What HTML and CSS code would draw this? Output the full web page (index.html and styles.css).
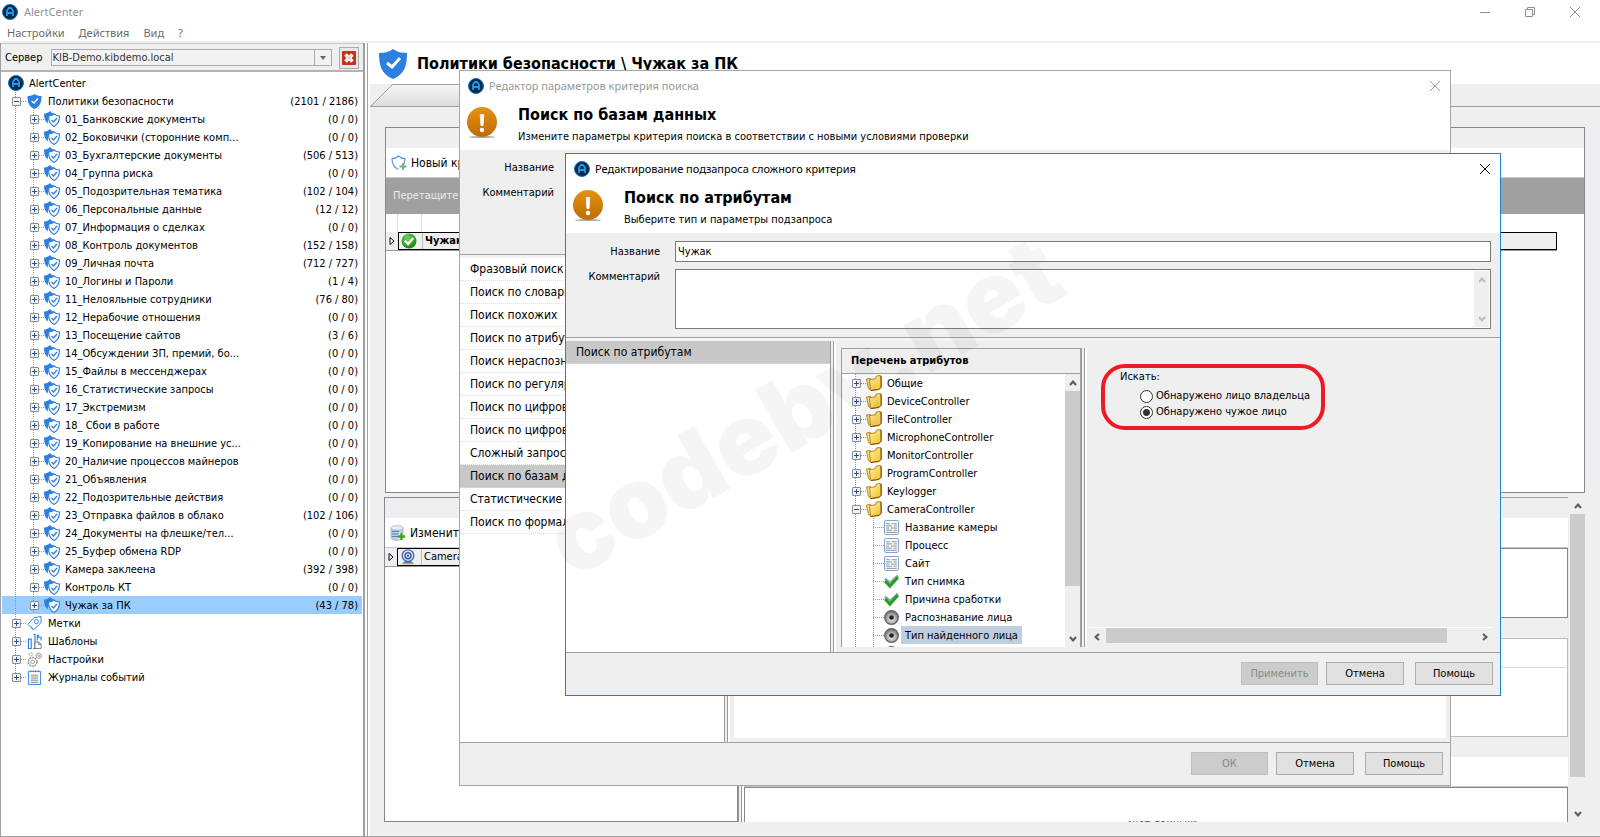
FILE: index.html
```html
<!DOCTYPE html>
<html lang="ru">
<head>
    <meta charset="UTF-8">
    <meta name="viewport" content="width=device-width, initial-scale=1.0">
    <title>AlertCenter</title>
    <link rel="stylesheet" href="styles.css">
</head>
<body>

<!-- Набор иконок -->
<svg class="sprite" aria-hidden="true">
    <defs>
        <linearGradient id="g-gold" x1="0" y1="0" x2="1" y2="1">
            <stop offset="0" stop-color="#fff3b0"/><stop offset="1" stop-color="#f2c01c"/>
        </linearGradient>
        <linearGradient id="g-orange" x1="0" y1="0" x2="0" y2="1">
            <stop offset="0" stop-color="#e39314"/><stop offset="1" stop-color="#c06a02"/>
        </linearGradient>
        <radialGradient id="g-green" cx="0.4" cy="0.3" r="0.8">
            <stop offset="0" stop-color="#6fd35a"/><stop offset="1" stop-color="#0b7d12"/>
        </radialGradient>
        <radialGradient id="g-steel" cx="0.5" cy="0.6" r="0.5">
            <stop offset="0" stop-color="#f4f4f4"/><stop offset="0.6" stop-color="#b4b4b4"/><stop offset="1" stop-color="#7c7c7c"/>
        </radialGradient>
    </defs>
    <symbol id="i-app" viewBox="0 0 16 16">
        <circle cx="8" cy="8" r="7.500" fill="#0b2c49" stroke="#1474b8"/>
        <path d="M5 12V6.500L7 4h2l2 2.500V12M5 9h6" fill="none" stroke="#1e9af0" stroke-width="1.800"/>
    </symbol>
    <symbol id="i-shield" viewBox="0 0 28 30">
        <path d="M14 0C10 3 5 4 0 4c0 12 2 21 14 26 12-5 14-14 14-26-5 0-10-1-14-4z" fill="#2d7fe0"/>
        <path d="M8 14l5 4 8-9" fill="none" stroke="#fff" stroke-width="3"/>
    </symbol>
    <symbol id="i-shields" viewBox="0 0 16 16">
        <path d="M6 0C4 2 2 2.500 0 2.500 0 7 1 10 3.500 12.500L5 5l6-2C9 2.500 7 1.500 6 0z" fill="#2d7fe0"/>
        <path d="M10 3C8.500 4.500 6.500 5 4.500 5c0 5 1.500 8.500 5.500 10.500 4-2 5.500-5.500 5.500-10.500C13.500 5 11.500 4.500 10 3z" fill="#fff" stroke="#2d7fe0" stroke-width="1.100"/>
        <path d="M7.500 9l2 2 3.500-4" fill="none" stroke="#2d7fe0" stroke-width="1.200"/>
    </symbol>
    <symbol id="i-shield-add" viewBox="0 0 16 16">
        <path d="M12.500 10c1-2 1.500-4 1.500-6.500C11.500 3.500 9 2.500 7.500 1 6 2.500 3.500 3.500 1 3.500 1 9 3 12.500 7.500 14.500" fill="none" stroke="#5b94d6" stroke-width="1.200"/>
        <path d="M12 8v7M8.500 11.500h7" stroke="#6fb07a" stroke-width="1.800"/>
    </symbol>
    <symbol id="i-tag" viewBox="0 0 16 16">
        <path d="M1 9l6-7 8-1.500V7l-8 8z" fill="#fff" stroke="#2d7fe0"/>
        <path d="M4 11l2.500 3" stroke="#2d7fe0"/>
        <circle cx="10" cy="6" r="2.200" fill="none" stroke="#2d7fe0"/>
    </symbol>
    <symbol id="i-templates" viewBox="0 0 16 16">
        <path d="M1.500 5.500h3v10h-3zM6.500.500h2v15h-2M11 7V1.500h1v2h3V7" fill="none" stroke="#2d7fe0" stroke-width="1.200"/>
        <path d="M8.500 8.500h4l2.500 2.500v4.500H8.500zM12 8.500V11h3" fill="#fff" stroke="#777"/>
    </symbol>
    <symbol id="i-gears" viewBox="0 0 16 16">
        <g fill="none" stroke="#9a9a9a">
            <circle cx="6" cy="10.500" r="4.600" stroke-width="1.600" stroke-dasharray="2.200 .700"/><circle cx="6" cy="10.500" r="2"/>
            <circle cx="4" cy="2.500" r="1.800" stroke-dasharray="1.500 .500"/>
            <circle cx="12.500" cy="4" r="2.800" stroke-width="1.400" stroke-dasharray="1.500 .600"/><circle cx="12.500" cy="4" r="1"/>
        </g>
    </symbol>
    <symbol id="i-log" viewBox="0 0 16 16">
        <path d="M1.500 1.500h13v14h-13z" fill="#fff" stroke="#2d7fe0"/>
        <path d="M4 0v2.500M6.700 0v2.500M9.300 0v2.500M12 0v2.500" stroke="#888"/>
        <path d="M4 5.500h8M4 7.500h8M4 9.500h8M4 11.500h8M4 13.500h8" stroke="#888"/>
    </symbol>
    <symbol id="i-warn" viewBox="0 0 30 31">
        <ellipse cx="15" cy="30" rx="13" ry="1" fill="#aaa"/>
        <circle cx="15" cy="15" r="15" fill="url(#g-orange)"/>
        <path d="M13.300 7.500h3.400l-.600 11h-2.200z" fill="#fff" stroke="#fff" stroke-width=".800" stroke-linejoin="round"/>
        <circle cx="15" cy="23" r="2.200" fill="#fff"/>
    </symbol>
    <symbol id="i-ok" viewBox="0 0 16 16">
        <circle cx="8" cy="8" r="7.500" fill="url(#g-green)"/>
        <path d="M3.800 7.500l3.200 3.500 5.300-6" fill="none" stroke="#fff" stroke-width="2.400"/>
    </symbol>
    <symbol id="i-db" viewBox="0 0 16 16">
        <path d="M1 3v10c0 3 12 3 12 0V3z" fill="#c3d0dc" stroke="#8f9eac" stroke-width=".600"/>
        <ellipse cx="7" cy="3" rx="6" ry="2.300" fill="#e8eef3" stroke="#8f9eac" stroke-width=".600"/>
        <path d="M2 6.500h7M2 9h7M2 11.500h6" stroke="#4a83c4"/>
        <path d="M11.500 8v7M8 11.500h7" stroke="#fff" stroke-width="4"/>
        <path d="M11.500 8v7M8 11.500h7" stroke="#3aa51c" stroke-width="2.400"/>
    </symbol>
    <symbol id="i-cam" viewBox="0 0 16 18">
        <path d="M3 15.500c2-2 8-2 10 0z" fill="#4b6fae" stroke="#4b6fae"/>
        <path d="M1.500 16.500h13" stroke="#d99a4a" stroke-width="1.500"/>
        <circle cx="8" cy="7.500" r="6.500" fill="#dfe6f1" stroke="#4b6fae" stroke-width="1.600"/>
        <circle cx="8" cy="7.500" r="3.300" fill="#fff" stroke="#3561ac" stroke-width="1.800"/>
        <circle cx="8" cy="7.500" r="1.200" fill="#27508f"/>
    </symbol>
    <symbol id="i-folder" viewBox="0 0 16 16">
        <path d="M.500 4l4-.500L5 15l-2.500-1.500z" fill="#fbe38a" stroke="#b07a12" stroke-width=".900"/>
        <path d="M3.500 4.500l6-.700.800-2.800 4.200-.500.500 11.500L13 14l-8.500 1.500z" fill="url(#g-gold)" stroke="#b07a12" stroke-width=".900"/>
        <path d="M15.300 1v11.200L13.200 14.500 5 15.600" fill="none" stroke="#6b4a0c" stroke-width=".900"/>
    </symbol>
    <symbol id="i-text" viewBox="0 0 14 14">
        <rect x=".500" y=".500" width="13" height="13" rx="1.500" fill="#fff" stroke="#7da7d3"/>
        <path d="M2 3.500h3.500M7 3.500h5M2 5.500h5.500M9 5.500h3M2 7.500h3M6.500 7.500H12M2 9.500h5.500M9 9.500h3M2 11.500h10" stroke="#6d7885" stroke-width=".800"/>
    </symbol>
    <symbol id="i-check" viewBox="0 0 14 13">
        <path d="M1 4l4.500 4L13 1" fill="none" stroke="#8fa0bd" stroke-width="2.500"/>
        <path d="M1 6l4.500 5L13 2.500" fill="none" stroke="#1ea51a" stroke-width="2.800"/>
    </symbol>
    <symbol id="i-radio" viewBox="0 0 15 15">
        <circle cx="7.500" cy="7.500" r="6.800" fill="url(#g-steel)" stroke="#5e5e5e" stroke-width="1.200"/>
        <circle cx="7.500" cy="7.500" r="2.300" fill="#222"/>
    </symbol>
    <symbol id="i-x" viewBox="0 0 10 10"><path d="M0 0l10 10M10 0L0 10" stroke="currentColor" fill="none"/></symbol>
    <symbol id="i-min" viewBox="0 0 10 10"><path d="M0 5.500h10" stroke="currentColor"/></symbol>
    <symbol id="i-max" viewBox="0 0 10 10"><path d="M.500 2.500h7v7h-7zM2.500 2.500v-2h7v7h-2" stroke="currentColor" fill="none"/></symbol>
    <symbol id="i-stop" viewBox="0 0 14 14">
        <rect width="14" height="14" rx="1" fill="#c9301c"/>
        <path d="M3.500 3.500l7 7M10.500 3.500l-7 7" stroke="#fff" stroke-width="3.600"/>
        <path d="M4.500 4.500l5 5M9.500 4.500l-5 5" stroke="#d9c9c4" stroke-width="1"/>
    </symbol>
    <symbol id="i-up" viewBox="0 0 8 8"><path d="M1 6l3-3.500L7 6" stroke="currentColor" stroke-width="2" fill="none"/></symbol>
    <symbol id="i-down" viewBox="0 0 8 8"><path d="M1 2l3 3.500L7 2" stroke="currentColor" stroke-width="2" fill="none"/></symbol>
    <symbol id="i-left" viewBox="0 0 8 8"><path d="M6 1L2.500 4 6 7" stroke="currentColor" stroke-width="2" fill="none"/></symbol>
    <symbol id="i-right" viewBox="0 0 8 8"><path d="M2 1l3.500 3L2 7" stroke="currentColor" stroke-width="2" fill="none"/></symbol>
    <symbol id="i-mark" viewBox="0 0 6 8"><path d="M1 .500l4 3.500-4 3.500z" stroke="#000" fill="#fff"/></symbol>
</svg>

<!-- Главное окно -->
<header class="titlebar">
    <svg class="ico"><use href="#i-app"/></svg>
    <span class="titlebar-text">AlertCenter</span>
    <div class="win-buttons">
        <button aria-label="Свернуть"><svg><use href="#i-min"/></svg></button>
        <button aria-label="Развернуть"><svg><use href="#i-max"/></svg></button>
        <button aria-label="Закрыть"><svg><use href="#i-x"/></svg></button>
    </div>
</header>
<nav class="menu">
    <a href="#">Настройки</a>
    <a href="#">Действия</a>
    <a href="#">Вид</a>
    <a href="#">?</a>
</nav>

<main class="workspace">
    <aside class="sidebar">
        <div class="server">
            <label for="server">Сервер</label>
            <div class="combo">
                <select id="server"><option>KIB-Demo.kibdemo.local</option></select>
            </div>
            <button class="stop" aria-label="Отключиться"><svg><use href="#i-stop"/></svg></button>
        </div>
        <ul class="tree">
            <li class="root"><svg class="ico"><use href="#i-app"/></svg><span>AlertCenter</span></li>
            <li class="l1"><button class="exp open" aria-label="Свернуть"></button><svg class="ico"><use href="#i-shield"/></svg><span>Политики безопасности</span><em>(2101 / 2186)</em></li>
            <li class="l2"><button class="exp" aria-label="Развернуть"></button><svg class="ico"><use href="#i-shields"/></svg><span>01_Банковские документы</span><em>(0 / 0)</em></li>
            <li class="l2"><button class="exp" aria-label="Развернуть"></button><svg class="ico"><use href="#i-shields"/></svg><span>02_Боковички (сторонние комп...</span><em>(0 / 0)</em></li>
            <li class="l2"><button class="exp" aria-label="Развернуть"></button><svg class="ico"><use href="#i-shields"/></svg><span>03_Бухгалтерские документы</span><em>(506 / 513)</em></li>
            <li class="l2"><button class="exp" aria-label="Развернуть"></button><svg class="ico"><use href="#i-shields"/></svg><span>04_Группа риска</span><em>(0 / 0)</em></li>
            <li class="l2"><button class="exp" aria-label="Развернуть"></button><svg class="ico"><use href="#i-shields"/></svg><span>05_Подозрительная тематика</span><em>(102 / 104)</em></li>
            <li class="l2"><button class="exp" aria-label="Развернуть"></button><svg class="ico"><use href="#i-shields"/></svg><span>06_Персональные данные</span><em>(12 / 12)</em></li>
            <li class="l2"><button class="exp" aria-label="Развернуть"></button><svg class="ico"><use href="#i-shields"/></svg><span>07_Информация о сделках</span><em>(0 / 0)</em></li>
            <li class="l2"><button class="exp" aria-label="Развернуть"></button><svg class="ico"><use href="#i-shields"/></svg><span>08_Контроль документов</span><em>(152 / 158)</em></li>
            <li class="l2"><button class="exp" aria-label="Развернуть"></button><svg class="ico"><use href="#i-shields"/></svg><span>09_Личная почта</span><em>(712 / 727)</em></li>
            <li class="l2"><button class="exp" aria-label="Развернуть"></button><svg class="ico"><use href="#i-shields"/></svg><span>10_Логины и Пароли</span><em>(1 / 4)</em></li>
            <li class="l2"><button class="exp" aria-label="Развернуть"></button><svg class="ico"><use href="#i-shields"/></svg><span>11_Нелояльные сотрудники</span><em>(76 / 80)</em></li>
            <li class="l2"><button class="exp" aria-label="Развернуть"></button><svg class="ico"><use href="#i-shields"/></svg><span>12_Нерабочие отношения</span><em>(0 / 0)</em></li>
            <li class="l2"><button class="exp" aria-label="Развернуть"></button><svg class="ico"><use href="#i-shields"/></svg><span>13_Посещение сайтов</span><em>(3 / 6)</em></li>
            <li class="l2"><button class="exp" aria-label="Развернуть"></button><svg class="ico"><use href="#i-shields"/></svg><span>14_Обсуждении ЗП, премий, бо...</span><em>(0 / 0)</em></li>
            <li class="l2"><button class="exp" aria-label="Развернуть"></button><svg class="ico"><use href="#i-shields"/></svg><span>15_Файлы в мессенджерах</span><em>(0 / 0)</em></li>
            <li class="l2"><button class="exp" aria-label="Развернуть"></button><svg class="ico"><use href="#i-shields"/></svg><span>16_Статистические запросы</span><em>(0 / 0)</em></li>
            <li class="l2"><button class="exp" aria-label="Развернуть"></button><svg class="ico"><use href="#i-shields"/></svg><span>17_Экстремизм</span><em>(0 / 0)</em></li>
            <li class="l2"><button class="exp" aria-label="Развернуть"></button><svg class="ico"><use href="#i-shields"/></svg><span>18_ Сбои в работе</span><em>(0 / 0)</em></li>
            <li class="l2"><button class="exp" aria-label="Развернуть"></button><svg class="ico"><use href="#i-shields"/></svg><span>19_Копирование на внешние ус...</span><em>(0 / 0)</em></li>
            <li class="l2"><button class="exp" aria-label="Развернуть"></button><svg class="ico"><use href="#i-shields"/></svg><span>20_Наличие процессов майнеров</span><em>(0 / 0)</em></li>
            <li class="l2"><button class="exp" aria-label="Развернуть"></button><svg class="ico"><use href="#i-shields"/></svg><span>21_Объявления</span><em>(0 / 0)</em></li>
            <li class="l2"><button class="exp" aria-label="Развернуть"></button><svg class="ico"><use href="#i-shields"/></svg><span>22_Подозрительные действия</span><em>(0 / 0)</em></li>
            <li class="l2"><button class="exp" aria-label="Развернуть"></button><svg class="ico"><use href="#i-shields"/></svg><span>23_Отправка файлов в облако</span><em>(102 / 106)</em></li>
            <li class="l2"><button class="exp" aria-label="Развернуть"></button><svg class="ico"><use href="#i-shields"/></svg><span>24_Документы на флешке/тел...</span><em>(0 / 0)</em></li>
            <li class="l2"><button class="exp" aria-label="Развернуть"></button><svg class="ico"><use href="#i-shields"/></svg><span>25_Буфер обмена RDP</span><em>(0 / 0)</em></li>
            <li class="l2"><button class="exp" aria-label="Развернуть"></button><svg class="ico"><use href="#i-shields"/></svg><span>Камера заклеена</span><em>(392 / 398)</em></li>
            <li class="l2"><button class="exp" aria-label="Развернуть"></button><svg class="ico"><use href="#i-shields"/></svg><span>Контроль КТ</span><em>(0 / 0)</em></li>
            <li class="l2 selected"><button class="exp" aria-label="Развернуть"></button><svg class="ico"><use href="#i-shields"/></svg><span>Чужак за ПК</span><em>(43 / 78)</em></li>
            <li class="l1"><button class="exp" aria-label="Развернуть"></button><svg class="ico"><use href="#i-tag"/></svg><span>Метки</span></li>
            <li class="l1"><button class="exp" aria-label="Развернуть"></button><svg class="ico"><use href="#i-templates"/></svg><span>Шаблоны</span></li>
            <li class="l1"><button class="exp" aria-label="Развернуть"></button><svg class="ico"><use href="#i-gears"/></svg><span>Настройки</span></li>
            <li class="l1 last"><button class="exp" aria-label="Развернуть"></button><svg class="ico"><use href="#i-log"/></svg><span>Журналы событий</span></li>
        </ul>
    </aside>

    <section class="content">
        <div class="content-head">
            <svg><use href="#i-shield"/></svg>
            <h1>Политики безопасности \ Чужак за ПК</h1>
        </div>
        <div class="tab-strip"><span class="tab"></span></div>
        <div class="content-body">
            <div class="panel criteria">
                <div class="strip"></div>
                <div class="toolbar"><svg class="ico"><use href="#i-shield-add"/></svg><span>Новый критерий</span></div>
                <div class="group-band">Перетащите</div>
                <div class="grid-head"></div>
                <div class="grid-row">
                    <span class="mark"><svg><use href="#i-mark"/></svg></span>
                    <div class="cells">
                        <span class="cell-ico"><svg class="ico"><use href="#i-ok"/></svg></span>
                        <strong>Чужак за ПК</strong>
                    </div>
                </div>
            </div>
            <div class="lower">
                <div class="panel sources">
                    <div class="strip"></div>
                    <div class="toolbar"><svg class="ico"><use href="#i-db"/></svg><span>Изменить</span></div>
                    <div class="grid-row">
                        <span class="mark"><svg><use href="#i-mark"/></svg></span>
                        <div class="cells">
                            <span class="cell-ico"><svg class="ico"><use href="#i-cam"/></svg></span>
                            <span>CameraController</span>
                        </div>
                    </div>
                </div>
                <div class="splitter"></div>
                <div class="details">
                    <div class="strip"></div>
                    <div class="toolbar"></div>
                    <div class="box box-first"></div>
                    <div class="strip"></div>
                    <div class="box box-light"><div class="box-head"></div></div>
                    <div class="strip"></div>
                    <div class="toolbar"></div>
                    <div class="box box-last">&lt;нет данных&gt;</div>
                </div>
                <div class="vscroll">
                    <button aria-label="Вверх"><svg><use href="#i-up"/></svg></button>
                    <div class="thumb main-thumb"></div>
                    <button aria-label="Вниз"><svg><use href="#i-down"/></svg></button>
                </div>
            </div>
        </div>
    </section>
</main>

<!-- Редактор параметров критерия -->
<section class="window editor">
    <div class="win-title">
        <svg class="ico"><use href="#i-app"/></svg>
        <span>Редактор параметров критерия поиска</span>
        <button aria-label="Закрыть"><svg><use href="#i-x"/></svg></button>
    </div>
    <div class="win-head">
        <svg><use href="#i-warn"/></svg>
        <div>
            <h2>Поиск по базам данных</h2>
            <p>Измените параметры критерия поиска в соответствии с новыми условиями проверки</p>
        </div>
    </div>
    <div class="form editor-form">
        <label for="crit-name">Название</label>
        <input type="text" id="crit-name">
        <label class="note-label" for="crit-note">Комментарий</label>
        <div class="memo"><textarea id="crit-note"></textarea></div>
    </div>
    <div class="win-body">
        <ul class="types">
            <li>Фразовый поиск</li>
            <li>Поиск по словарю</li>
            <li>Поиск похожих</li>
            <li>Поиск по атрибутам</li>
            <li>Поиск нераспознанных</li>
            <li>Поиск по регулярным выражениям</li>
            <li>Поиск по цифровым отпечаткам</li>
            <li>Поиск по цифровым отпечаткам БД</li>
            <li>Сложный запрос</li>
            <li class="selected">Поиск по базам данных</li>
            <li>Статистические запросы</li>
            <li>Поиск по формальным признакам</li>
        </ul>
        <div class="splitter"></div>
        <div class="editor-pane"></div>
    </div>
    <div class="win-foot">
        <button class="btn" disabled>ОК</button>
        <button class="btn">Отмена</button>
        <button class="btn">Помощь</button>
    </div>
</section>

<!-- Редактирование подзапроса -->
<section class="window subquery">
    <div class="win-title">
        <svg class="ico"><use href="#i-app"/></svg>
        <span>Редактирование подзапроса сложного критерия</span>
        <button aria-label="Закрыть"><svg><use href="#i-x"/></svg></button>
    </div>
    <div class="win-head">
        <svg><use href="#i-warn"/></svg>
        <div>
            <h2>Поиск по атрибутам</h2>
            <p>Выберите тип и параметры подзапроса</p>
        </div>
    </div>
    <div class="form">
        <label for="sub-name">Название</label>
        <input type="text" id="sub-name" value="Чужак">
        <label class="note-label" for="sub-note">Комментарий</label>
        <div class="memo">
            <textarea id="sub-note"></textarea>
            <div class="vscroll off">
                <button aria-label="Вверх"><svg><use href="#i-up"/></svg></button>
                <button aria-label="Вниз"><svg><use href="#i-down"/></svg></button>
            </div>
        </div>
    </div>
    <div class="win-body">
        <ul class="types">
            <li class="selected">Поиск по атрибутам</li>
        </ul>
        <div class="splitter"></div>
        <div class="attr-pane">
            <div class="attrs">
                <h3>Перечень атрибутов</h3>
                <div class="attrs-body">
                    <ul class="tree attr-tree">
                        <li class="l1"><button class="exp" aria-label="Развернуть"></button><svg class="ico"><use href="#i-folder"/></svg><span>Общие</span></li>
                        <li class="l1"><button class="exp" aria-label="Развернуть"></button><svg class="ico"><use href="#i-folder"/></svg><span>DeviceController</span></li>
                        <li class="l1"><button class="exp" aria-label="Развернуть"></button><svg class="ico"><use href="#i-folder"/></svg><span>FileController</span></li>
                        <li class="l1"><button class="exp" aria-label="Развернуть"></button><svg class="ico"><use href="#i-folder"/></svg><span>MicrophoneController</span></li>
                        <li class="l1"><button class="exp" aria-label="Развернуть"></button><svg class="ico"><use href="#i-folder"/></svg><span>MonitorController</span></li>
                        <li class="l1"><button class="exp" aria-label="Развернуть"></button><svg class="ico"><use href="#i-folder"/></svg><span>ProgramController</span></li>
                        <li class="l1"><button class="exp" aria-label="Развернуть"></button><svg class="ico"><use href="#i-folder"/></svg><span>Keylogger</span></li>
                        <li class="l1"><button class="exp open" aria-label="Свернуть"></button><svg class="ico"><use href="#i-folder"/></svg><span>CameraController</span></li>
                        <li class="l2"><svg class="ico"><use href="#i-text"/></svg><span>Название камеры</span></li>
                        <li class="l2"><svg class="ico"><use href="#i-text"/></svg><span>Процесс</span></li>
                        <li class="l2"><svg class="ico"><use href="#i-text"/></svg><span>Сайт</span></li>
                        <li class="l2"><svg class="ico"><use href="#i-check"/></svg><span>Тип снимка</span></li>
                        <li class="l2"><svg class="ico"><use href="#i-check"/></svg><span>Причина сработки</span></li>
                        <li class="l2"><svg class="ico"><use href="#i-radio"/></svg><span>Распознавание лица</span></li>
                        <li class="l2"><svg class="ico"><use href="#i-radio"/></svg><span class="picked">Тип найденного лица</span></li>
                        <li class="l2"><svg class="ico"><use href="#i-radio"/></svg></li>
                    </ul>
                    <div class="vscroll">
                        <button aria-label="Вверх"><svg><use href="#i-up"/></svg></button>
                        <div class="thumb attr-thumb"></div>
                        <button aria-label="Вниз"><svg><use href="#i-down"/></svg></button>
                    </div>
                </div>
            </div>
            <div class="splitter"></div>
            <div class="options">
                <fieldset class="face">
                    <legend>Искать:</legend>
                    <label><input type="radio" name="face">Обнаружено лицо владельца</label>
                    <label><input type="radio" name="face" checked>Обнаружено чужое лицо</label>
                </fieldset>
                <div class="hscroll">
                    <button aria-label="Влево"><svg><use href="#i-left"/></svg></button>
                    <div class="thumb"></div>
                    <button aria-label="Вправо"><svg><use href="#i-right"/></svg></button>
                </div>
            </div>
        </div>
    </div>
    <div class="win-foot">
        <button class="btn" disabled>Применить</button>
        <button class="btn">Отмена</button>
        <button class="btn">Помощь</button>
    </div>
</section>

<div class="watermark">codeby.net</div>

</body>
</html>
```
FILE: styles.css
```css
* {
    box-sizing: border-box;
}
body {
    --grey: #efefef;
    --line: #a0a0a0;
    --vdots: repeating-linear-gradient(#999 0 1px, transparent 1px 2px);
    --hdots: repeating-linear-gradient(90deg, #999 0 1px, transparent 1px 2px);
    display: flex;
    flex-direction: column;
    height: 100vh;
    margin: 0;
    overflow: hidden;
    position: relative;
    background: #fff;
    color: #000;
    font: 11px/18px "DejaVu Sans Condensed", "DejaVu Sans", sans-serif;
    border-bottom: 1px solid var(--line);
}
ul, h1, h2, h3, p {
    margin: 0;
    padding: 0;
    list-style: none;
}
button, input, select, textarea {
    font: inherit;
    color: inherit;
    margin: 0;
    padding: 0;
    border: 0;
    border-radius: 0;
    background: none;
}
svg {
    display: block;
    flex: none;
}
.sprite {
    position: absolute;
    width: 0;
    height: 0;
}
.ico {
    width: 16px;
    height: 16px;
}

/* Заголовок и меню главного окна */
.titlebar {
    display: flex;
    align-items: center;
    gap: 6px;
    height: 23px;
    padding-left: 2px;
    color: #8c9296;
    font: 11px/20px "Noto Sans", sans-serif;
}
.win-buttons {
    display: flex;
    gap: 35px;
    margin-left: auto;
    padding-right: 20px;
    color: #8f8f93;
}
.win-buttons svg,
.win-title button svg {
    width: 10px;
    height: 10px;
}
.menu {
    display: flex;
    gap: 14px;
    height: 20px;
    padding-left: 7px;
    border-bottom: 2px solid var(--grey);
    font: 11px/20px "Noto Sans", sans-serif;
}
.menu a {
    color: #6b6b6b;
    text-decoration: none;
}
.workspace {
    display: flex;
    flex: 1;
    min-height: 0;
}

/* Левая панель */
.sidebar {
    flex: none;
    width: 370px;
    border-left: 1px solid var(--line);
    border-right: 2px solid #fff;
    display: flex;
    flex-direction: column;
    box-shadow: inset -1px 0 var(--line), inset -3px 0 #fff, inset -5px 0 var(--line);
    padding-right: 5px;
}
.server {
    display: flex;
    align-items: center;
    height: 29px;
    padding: 1px 4px 0;
    background: var(--grey);
    border-top: 1px solid #c8c8c8;
    border-bottom: 2px solid #b4b4b4;
}
.combo {
    flex: 1;
    display: flex;
    position: relative;
    margin: 0 7px 0 8px;
    border: 1px solid #ababab;
    background: #f3f3f3;
}
.combo select {
    flex: 1;
    height: 15px;
    padding-left: 1px;
    appearance: none;
    line-height: 15px;
    color: #333;
    background: linear-gradient(#ababab, #ababab) right 16px top 0/1px 100% no-repeat;
}
.combo::after {
    content: "";
    position: absolute;
    right: 5px;
    top: 6px;
    border: 3px solid transparent;
    border-top: 4px solid #666;
    border-bottom: 0;
}
.stop {
    width: 20px;
    height: 22px;
    padding: 2px;
    border: 1px solid #ababab;
    background: #e8e8e8;
}
.stop svg {
    width: 14px;
    height: 14px;
}

/* Дерево */
.tree li {
    display: flex;
    align-items: center;
    height: 18px;
    white-space: nowrap;
}
.tree span,
.tree em {
    line-height: 16px;
    padding-top: 2px;
}
.sidebar .tree {
    padding: 2px 1px 0;
}
.tree em {
    margin-left: auto;
    padding-right: 4px;
    font-style: normal;
}
.tree .root {
    gap: 5px;
    padding-left: 6px;
}
.tree .l1 {
    gap: 6px;
    padding-left: 10px;
    background: var(--vdots) 13px 0/1px 100% no-repeat, var(--hdots) 19px 9px/6px 1px no-repeat;
}
.tree .l1.last {
    background-size: 1px 50%, 6px 1px;
}
.tree .l2 {
    gap: 5px;
    padding-left: 28px;
    background: var(--vdots) 13px 0/1px 100% no-repeat, var(--vdots) 31px 0/1px 100% no-repeat, var(--hdots) 37px 9px/6px 1px no-repeat;
}
.tree .selected {
    background-color: #99ccff;
}
.exp {
    flex: none;
    width: 9px;
    height: 9px;
    border: 1px solid #8c8c8c;
    border-radius: 1px;
    background: linear-gradient(#2b4f9e, #2b4f9e) 1px 3px/5px 1px no-repeat, linear-gradient(#2b4f9e, #2b4f9e) 3px 1px/1px 5px no-repeat, #f4f4f4;
}
.exp.open {
    background: linear-gradient(#2b4f9e, #2b4f9e) 1px 3px/5px 1px no-repeat, #f4f4f4;
}
.l1 .ico {
    width: 15px;
    height: 15px;
}

/* Правая часть */
.content {
    flex: 1;
    min-width: 0;
    display: flex;
    flex-direction: column;
}
.content-head {
    display: flex;
    align-items: center;
    gap: 10px;
    height: 41px;
    padding-left: 9px;
}
.content-head svg {
    width: 28px;
    height: 30px;
}
h1, h2 {
    font-size: 16px;
    line-height: 24px;
    font-weight: bold;
    white-space: nowrap;
}
.tab-strip {
    height: 23px;
    background: var(--grey);
    border-bottom: 1px solid var(--line);
}
.tab {
    display: block;
    width: 240px;
    height: 22px;
    clip-path: polygon(22px 0, 100% 0, 100% 100%, 0 100%);
    border-top: 1px solid var(--line);
    background: linear-gradient(135deg, transparent 15px, var(--line) 15px 16px, transparent 16px), linear-gradient(#f6f6f6, #dcdcdc);
}
.content-body {
    flex: 1;
    min-height: 0;
    display: flex;
    flex-direction: column;
    gap: 4px;
    padding: 20px 15px 14px 14px;
    background: var(--grey);
}
.panel {
    background: #fff;
    border: 1px solid #828790;
    overflow: hidden;
}
.criteria {
    flex: 1;
    margin-left: 1px;
}
.lower {
    flex: 0 0 325px;
    display: flex;
    min-height: 0;
}
.sources {
    flex: none;
    width: 354px;
}
.strip {
    height: 20px;
    background: var(--grey);
}
.toolbar {
    display: flex;
    align-items: center;
    gap: 4px;
    height: 30px;
    padding-left: 5px;
    border-bottom: 1px solid #c8c8c8;
    font-size: 12px;
    background: #fff;
}
.group-band {
    height: 36px;
    padding-left: 7px;
    line-height: 36px;
    color: #ebebeb;
    background: #a0a0a0;
}
.grid-head {
    height: 18px;
    background: linear-gradient(#ddd, #ddd) 11px 0/1px 100% no-repeat, linear-gradient(#ddd, #ddd) 35px 0/1px 100% no-repeat;
}
.grid-row {
    display: flex;
    height: 19px;
    border-bottom: 1px solid #999;
}
.criteria .grid-row {
    margin-right: 27px;
}
.mark {
    display: flex;
    align-items: center;
    justify-content: center;
    width: 12px;
    background: var(--grey);
}
.mark svg {
    width: 6px;
    height: 8px;
}
.cells {
    flex: 1;
    display: flex;
    align-items: center;
    gap: 2px;
    border: 1px solid #000;
    background: var(--grey);
    white-space: nowrap;
}
.cell-ico {
    width: 24px;
    padding-left: 2px;
    border-right: 1px solid #bbb;
}
.splitter {
    flex: none;
    width: 6px;
    background: linear-gradient(90deg, #999 0 1px, #f0f0f0 1px 3px, #999 3px 4px, #fff 4px);
}
.details {
    flex: 1;
    display: flex;
    flex-direction: column;
    overflow: hidden;
    border-top: 1px solid var(--line);
    margin-right: 2px;
}
.details > * {
    flex: none;
}
.box {
    background: #fff;
    border: 1px solid #828790;
}
.box-first {
    height: 70px;
}
.box-light {
    height: 99px;
    border-color: #bcbcbc;
    padding: 0 1px;
}
.box-head {
    height: 29px;
    border-bottom: 1px solid #d8d8d8;
}
.box-last {
    height: 60px;
    line-height: 20px;
    padding: 26px 0 0 13px;
    text-align: center;
    color: #555;
}
.vscroll {
    flex: none;
    width: 15px;
    display: flex;
    flex-direction: column;
    background: var(--grey);
    color: #5a5a5a;
}
.vscroll button,
.hscroll button {
    flex: none;
    display: flex;
    align-items: center;
    justify-content: center;
    width: 15px;
    height: 17px;
}
.vscroll button:last-child {
    margin-top: auto;
}
.vscroll svg,
.hscroll svg {
    width: 8px;
    height: 8px;
}
.vscroll.off {
    color: #bdbdbd;
    margin: 1px;
}
.thumb {
    background: #cbcbcb;
}
.main-thumb {
    flex: 0 1 263px;
}
.attr-thumb {
    flex: 0 1 195px;
}

/* Окна диалогов */
.window {
    position: absolute;
    display: flex;
    flex-direction: column;
    background: #fff;
}
.editor {
    left: 459px;
    top: 70px;
    right: 149px;
    bottom: 50px;
    border: 1px solid #a6a6a6;
}
.subquery {
    left: 565px;
    top: 153px;
    right: 99px;
    bottom: 140px;
    border: 1px solid #1883d7;
}
.win-title {
    display: flex;
    align-items: center;
    gap: 5px;
    height: 29px;
    padding: 0 10px 0 8px;
    font: 11px/20px "Noto Sans", sans-serif;
}
.editor .win-title {
    color: #999;
}
.win-title button {
    margin-left: auto;
}
.win-head {
    display: flex;
    gap: 21px;
    height: 50px;
    padding: 7px 0 0 7px;
}
.win-head svg {
    width: 30px;
    height: 31px;
}
.win-head > div {
    margin-top: -4px;
}
.win-head p {
    line-height: 20px;
    white-space: nowrap;
}
.form {
    display: grid;
    grid-template-columns: 94px 1fr;
    grid-template-rows: 21px 60px;
    gap: 7px 15px;
    padding: 8px 9px 8px 0;
    background: var(--grey);
    border-bottom: 1px solid var(--line);
}
.form label {
    line-height: 22px;
    text-align: right;
}
.form .note-label {
    line-height: 16px;
}
.form input,
.memo {
    border: 1px solid #7a7a7a;
    background: #fff;
}
.form input {
    padding-left: 2px;
}
.memo {
    display: flex;
}
.memo textarea {
    flex: 1;
    resize: none;
}
.editor-form {
    padding-top: 7px;
    padding-bottom: 9px;
}
.win-body {
    flex: 1;
    min-height: 0;
    display: flex;
    border-top: 3px solid #f4f4f4;
    border-bottom: 1px solid var(--line);
}
.types {
    flex: none;
    width: 264px;
    overflow: hidden;
}
.types li {
    height: 23px;
    padding-left: 10px;
    line-height: 23px;
    font-size: 12px;
    white-space: nowrap;
    border-bottom: 1px dotted #ddd;
}
.types .selected {
    background: #c8c8c8;
}
.editor-pane {
    flex: 1;
    border: 4px solid var(--grey);
}
.win-foot {
    display: flex;
    justify-content: flex-end;
    align-items: flex-start;
    height: 42px;
    padding: 9px 7px 0 0;
    background: var(--grey);
}
.btn {
    width: 78px;
    height: 23px;
    margin-left: 11px;
    border: 1px solid #adadad;
    background: #e1e1e1;
}
.btn:disabled {
    width: 77px;
    margin-right: -3px;
    color: #8a8a8a;
    border-color: #bfbfbf;
    background: #ccc;
}

/* Атрибуты подзапроса */
.attr-pane {
    flex: 1;
    min-width: 0;
    display: flex;
    padding: 7px 0 5px 5px;
    background: var(--grey);
}
.attrs {
    flex: none;
    width: 240px;
    display: flex;
    flex-direction: column;
    border: 1px solid var(--line);
    border-bottom: 0;
}
.attrs h3 {
    height: 25px;
    padding-left: 9px;
    font-size: 11px;
    line-height: 24px;
    border-bottom: 1px solid var(--line);
}
.attrs-body {
    flex: 1;
    min-height: 0;
    display: flex;
    background: #fff;
}
.attr-tree {
    flex: 1;
    overflow: hidden;
}
.attr-tree .l1 .ico {
    width: 16px;
    height: 16px;
}
.attr-tree .l1 {
    gap: 5px;
}
.attr-tree .l2 {
    gap: 2px;
    padding-left: 42px;
    background: var(--vdots) 13px 0/1px 100% no-repeat, var(--vdots) 31px 0/1px 100% no-repeat, var(--hdots) 31px 9px/11px 1px no-repeat;
}
.attr-tree .l2 .ico {
    width: 15px;
    height: 15px;
}
.attr-tree .l2 span {
    padding-left: 4px;
    padding-right: 4px;
}
.picked {
    background: #bfcfdf;
}
.options {
    flex: 1;
    display: flex;
    flex-direction: column;
    justify-content: space-between;
    align-items: flex-start;
    padding: 16px 8px 2px 2px;
}
.face {
    display: flex;
    flex-direction: column;
    margin: 0 0 0 12px;
    padding: 1px 0 0 35px;
    border: 4px solid #ed1c24;
    border-radius: 24px;
    width: 224px;
    height: 66px;
}
.face legend {
    float: left;
    margin: 0 0 3px -20px;
    padding: 0;
    line-height: 16px;
}
.face label {
    display: flex;
    align-items: center;
    gap: 3px;
    height: 16px;
    white-space: nowrap;
}
.face input {
    appearance: none;
    width: 13px;
    height: 13px;
    border: 1px solid #333;
    border-radius: 50%;
    background: #fff;
}
.face input:checked {
    background: radial-gradient(circle, #333 0 3px, #fff 4px);
}
.hscroll {
    display: flex;
    align-self: stretch;
    border-top: 1px solid #fff;
    color: #5a5a5a;
}
.hscroll .thumb {
    flex: 1;
    height: 15px;
    margin: 0 30px 0 2px;
}

.watermark {
    position: absolute;
    left: 803px;
    top: 405px;
    font: 900 100px/120px Inter, sans-serif;
    color: rgba(0, 0, 0, 0.04);
    transform: translate(-50%, -50%) rotate(-30deg);
    pointer-events: none;
}
```
